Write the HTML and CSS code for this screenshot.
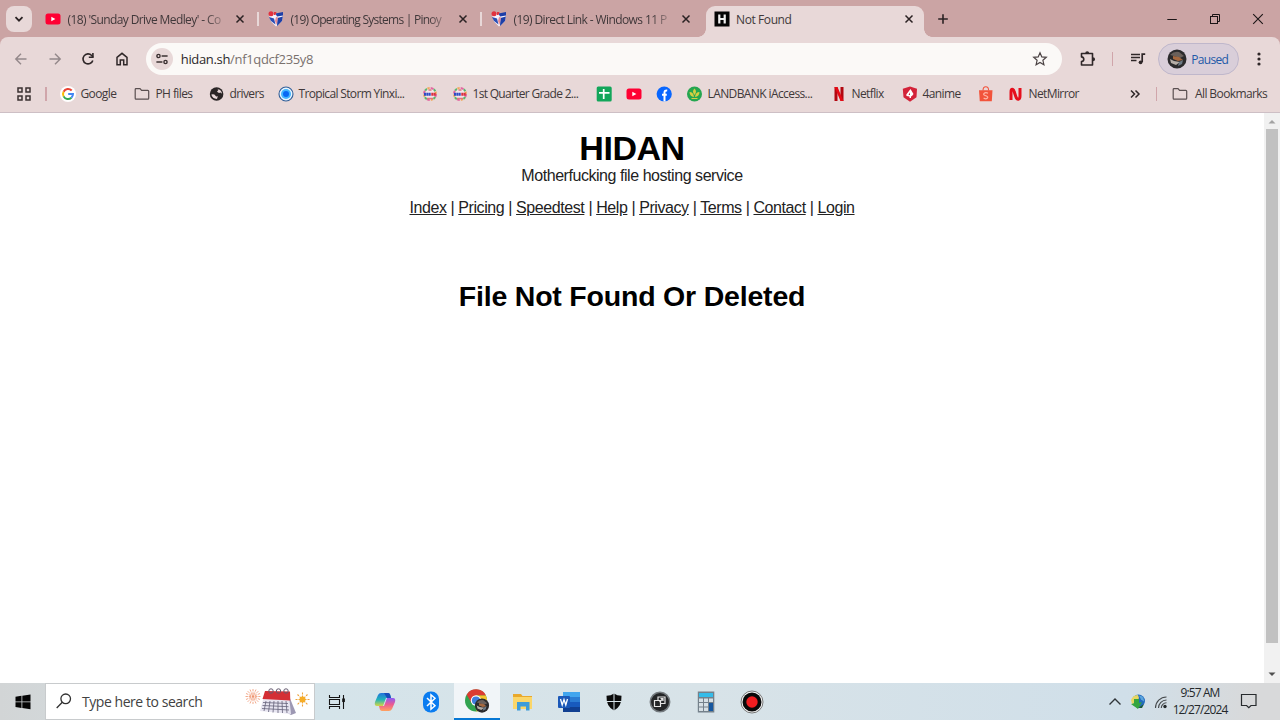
FILE: index.html
```html
<!DOCTYPE html>
<html lang="en">

<head>
    <meta charset="UTF-8">
    <meta name="viewport" content="width=device-width, initial-scale=1.0">
    <title>Not Found</title>
    <link rel="stylesheet" href="styles.css">
</head>

<body>
    <!-- Shared icons -->
    <svg class="defs" width="0" height="0">
        <symbol id="youtube" viewBox="0 0 16 16">
            <rect x="0.5" y="2.5" width="15" height="11" rx="2.5" fill="#ff0033" />
            <path d="M6.3 5.7v4.6L10.4 8z" fill="#fff" />
        </symbol>
        <symbol id="close" viewBox="0 0 10 10">
            <path d="M1.5 1.5l7 7M8.5 1.5l-7 7" stroke="#2b2223" stroke-width="1.5" />
        </symbol>
        <symbol id="pinoy" viewBox="0 0 16 16">
            <path d="M1 4l14-2-1 8-6 5.5-5-5z" fill="#f4f1fa" />
            <path d="M7.5 2.5L15 1v3.5l-6 1zM14.8 5.5L14 10l-5 5 .5-8z" fill="#1d3fa8" />
            <path d="M1 6l5 1.5 1.5 6L3 10z" fill="#2a4db4" />
            <path d="M8 6l2 .5L8.500 14 7 10z" fill="#e58b96" />
            <circle cx="3" cy="2.8" r="2.5" fill="#e1323f" />
            <path d="M6 1h2.5l-1 3H6z" fill="#e1323f" />
        </symbol>
        <symbol id="folder" viewBox="0 0 16 16">
            <path d="M1.2 3.4q0-.8.8-.8h4l1.6 1.8h6.2q.9 0 .9.9v7q0 .9-.9.9H2q-.8 0-.8-.9z" fill="none" stroke="#5a4f50" stroke-width="1.2" />
        </symbol>
        <symbol id="deped" viewBox="0 0 16 16">
            <circle cx="8" cy="8" r="6.5" fill="#f3e6ea" />
            <g fill="none" stroke-width="2">
                <circle cx="8" cy="8" r="6" stroke="#e2689f" stroke-dasharray="3 6.4" />
                <circle cx="8" cy="8" r="6" stroke="#5cb56f" stroke-dasharray="2.4 7" stroke-dashoffset="-3.2" />
                <circle cx="8" cy="8" r="6" stroke="#f0a85a" stroke-dasharray="2.4 7" stroke-dashoffset="-6" />
            </g>
            <path d="M5 12.5h6M6.5 4h3" stroke="#e0767c" stroke-width="1.3" />
            <path d="M2 8.2h7" stroke="#2f4cc4" stroke-width="3" stroke-dasharray="2 .3" />
            <path d="M9.3 8.2H14" stroke="#d9303f" stroke-width="3" stroke-dasharray="2 .3" />
        </symbol>
        <symbol id="avatar" viewBox="0 0 20 20">
            <circle cx="10" cy="10" r="9.5" fill="#2b2a2c" />
            <path d="M3 6q4-4 9-3l5 4-4 2-6-2z" fill="#6a605b" />
            <path d="M6 7l6 1 4 3-5 1-5-2z" fill="#a5683f" />
            <path d="M3 10l4 2 6 1-4 3-5-2z" fill="#b5ada6" />
            <path d="M12 13l4-2-1 4-4 2z" fill="#6d7a85" />
        </symbol>
    </svg>

    <!-- Tab strip -->
    <div class="tab-strip">
        <div class="tab-search">
            <svg width="10" height="10" viewBox="0 0 10 10"><path d="M1.5 3.2L5 6.7l3.5-3.5" fill="none" stroke="#2b2223" stroke-width="1.8" /></svg>
        </div>
        <div class="tab">
            <svg class="icon"><use href="#youtube" /></svg>
            <span class="tab-title fade sunday">(18) 'Sunday Drive Medley' - Co</span>
            <svg class="close"><use href="#close" /></svg>
        </div>
        <div class="tab divided">
            <svg class="icon"><use href="#pinoy" /></svg>
            <span class="tab-title fade systems">(19) Operating Systems | Pinoy</span>
            <svg class="close"><use href="#close" /></svg>
        </div>
        <div class="tab divided">
            <svg class="icon"><use href="#pinoy" /></svg>
            <span class="tab-title fade direct">(19) Direct Link - Windows 11 P</span>
            <svg class="close"><use href="#close" /></svg>
        </div>
        <div class="tab active">
            <svg class="icon" viewBox="0 0 16 16"><rect x=".5" y=".5" width="15" height="15" fill="#050505" /><path d="M5.3 3.5v9M10.7 3.5v9M5.3 8h5.4" stroke="#f0f0f0" stroke-width="2.2" /></svg>
            <span class="tab-title">Not Found</span>
            <svg class="close"><use href="#close" /></svg>
        </div>
        <svg class="new-tab" width="12" height="12" viewBox="0 0 12 12"><path d="M6 1.2v9.6M1.2 6h9.6" stroke="#2b2223" stroke-width="1.6" /></svg>
        <div class="window-buttons">
            <svg width="12" height="12" viewBox="0 0 12 12"><path d="M1.3 6.5h9.5" stroke="#1b1516" /></svg>
            <svg width="12" height="12" viewBox="0 0 12 12" fill="none" stroke="#1b1516"><rect x="1.5" y="3.5" width="7" height="7" /><path d="M3.5 3.5v-2h7v7h-2" /></svg>
            <svg width="12" height="12" viewBox="0 0 12 12"><path d="M1.2 1.2l9.6 9.6M10.8 1.2l-9.6 9.6" stroke="#1b1516" stroke-width="1.1" /></svg>
        </div>
    </div>

    <!-- Toolbar -->
    <div class="browser">
        <div class="toolbar">
            <svg class="nav-icon" viewBox="0 0 16 16"><path d="M13.5 8H3M8 2.8L2.8 8 8 13.2" fill="none" stroke="#93888a" stroke-width="1.4" /></svg>
            <svg class="nav-icon" viewBox="0 0 16 16"><path d="M2.5 8H13M8 2.8L13.2 8 8 13.2" fill="none" stroke="#93888a" stroke-width="1.4" /></svg>
            <svg class="nav-icon" viewBox="0 0 16 16"><path d="M12.8 9.4A5 5 0 1 1 11.7 4.5L13 6" fill="none" stroke="#2f2728" stroke-width="1.6" /><path d="M13.7 2v5H8.8V5.6h3.3V2z" fill="#2f2728" /></svg>
            <svg class="nav-icon" viewBox="0 0 16 16"><path d="M3 6.3l5-4 5 4v7.4H9.7V9H6.3v4.7H3z" fill="none" stroke="#2f2728" stroke-width="1.5" /></svg>
            <div class="address-bar">
                <span class="site-info">
                    <svg width="12" height="12" viewBox="0 0 12 12" fill="none" stroke="#3a3031" stroke-width="1.4"><circle cx="2.5" cy="3" r="1.6" /><path d="M5.6 3h6M.4 9h6" /><circle cx="9.5" cy="9" r="1.6" /></svg>
                </span>
                <span class="url">hidan.sh<span class="path">/nf1qdcf235y8</span></span>
                <svg class="star" viewBox="0 0 16 16"><path d="M8 1.8l1.8 4.1 4.5.4-3.4 3 1 4.4L8 11.4l-3.9 2.3 1-4.4-3.4-3 4.5-.4z" fill="none" stroke="#4b4344" stroke-width="1.2" /></svg>
            </div>
            <svg class="extensions" viewBox="0 0 18 18"><path d="M2.5 3.5h11V15h-11v-3.5q2.300-.3 2.300-2.300T2.500 6.900z" fill="none" stroke="#2f2728" stroke-width="1.6" stroke-linejoin="round" /><path d="M6.2 3.5a2 2.3 0 0 1 4 0zM13.8 7.3a2.3 2 0 0 1 0 4z" fill="#2f2728" /></svg>
            <span class="divider"></span>
            <svg class="media" viewBox="0 0 16 16" fill="none" stroke="#2f2728" stroke-width="1.5"><path d="M1 3.5h9M1 6.5h9M1 9.5h5.5" /><path d="M12.2 11V3.2h3" stroke-width="1.7" /><circle cx="10.6" cy="11.3" r="1.9" fill="#2f2728" stroke="none" /></svg>
            <div class="profile">
                <svg width="20" height="20"><use href="#avatar" /></svg>
                <span>Paused</span>
            </div>
            <svg class="more" viewBox="0 0 4 16" fill="#2f2728"><circle cx="2" cy="3" r="1.6" /><circle cx="2" cy="8" r="1.6" /><circle cx="2" cy="13" r="1.6" /></svg>
        </div>

        <!-- Bookmarks -->
        <div class="bookmarks">
            <svg class="apps" viewBox="0 0 14 14" fill="none" stroke="#3a3031" stroke-width="1.5"><rect x="1" y="1" width="4" height="4" /><rect x="9" y="1" width="4" height="4" /><rect x="1" y="9" width="4" height="4" /><rect x="9" y="9" width="4" height="4" /></svg>
            <span class="divider"></span>
            <div class="bookmark google">
                <svg class="icon" viewBox="0 0 16 16"><circle cx="8" cy="8" r="8" fill="#fff" /><g fill="none" stroke-width="2"><path d="M11.7 4.5A5 5 0 0 0 3.6 5.7" stroke="#ea4335" /><path d="M3.6 5.7a5 5 0 0 0 0 4.7" stroke="#fbbc05" /><path d="M3.6 10.4a5 5 0 0 0 7.8 1.3" stroke="#34a853" /><path d="M11.4 11.7A5 5 0 0 0 13 8.1H8.2" stroke="#4285f4" /></g></svg>
                <span>Google</span>
            </div>
            <div class="bookmark ph">
                <svg class="icon"><use href="#folder" /></svg>
                <span>PH files</span>
            </div>
            <div class="bookmark drivers">
                <svg class="icon" viewBox="0 0 16 16"><circle cx="7.6" cy="8" r="6.8" fill="#2a2526" /><path d="M2.3 8.5q3-.8 4 1t2 .7-.3 2.8q-4.700-.5-5.700-4.500zM8 2.800l1.500 1-1.500 2 2 1.200 1.500-.5L13 7.800q-.2-3.800-5-5z" fill="#e8d8d9" /></svg>
                <span>drivers</span>
            </div>
            <div class="bookmark storm">
                <svg class="icon" viewBox="0 0 16 16"><circle cx="8" cy="8" r="7" fill="#e8f5ff" stroke="#315e98" stroke-width="1.1" /><circle cx="8" cy="8" r="5" fill="#42b6ff" /><circle cx="8" cy="8" r="3" fill="#0869f4" /></svg>
                <span>Tropical Storm Yinxi...</span>
            </div>
            <div class="bookmark small"><svg class="icon"><use href="#deped" /></svg></div>
            <div class="bookmark quarter">
                <svg class="icon"><use href="#deped" /></svg>
                <span>1st Quarter Grade 2...</span>
            </div>
            <div class="bookmark small"><svg class="icon" viewBox="0 0 16 16"><rect x=".7" y=".5" width="15" height="15" rx="1.5" fill="#12a65a" /><path d="M7.7 3v10M3 6.8h10.5" stroke="#fff" stroke-width="1.7" /></svg></div>
            <div class="bookmark small"><svg class="icon"><use href="#youtube" /></svg></div>
            <div class="bookmark small facebook"><svg class="icon" viewBox="0 0 16 16"><circle cx="8.2" cy="8" r="7.6" fill="#0866ff" /><path d="M8.5 15.4V6.5q0-2.3 2.7-2M6 8.7h4.8" fill="none" stroke="#fff" stroke-width="2" /></svg></div>
            <div class="bookmark landbank">
                <svg class="icon" viewBox="0 0 16 16"><circle cx="7.5" cy="8" r="7.5" fill="#25a650" /><path d="M7.5 2.5q3 3.2 0 6.5-3-3.3 0-6.5M2.5 6q4 0 4.5 5-4.3-.5-4.5-5M12.5 6q-4 0-4.5 5 4.3-.5 4.5-5" fill="#d6cf42" /><path d="M4.5 12.5h6" stroke="#d6cf42" /></svg>
                <span>LANDBANK iAccess...</span>
            </div>
            <div class="bookmark netflix">
                <svg class="icon" viewBox="0 0 16 16"><path d="M3.5 1h3v14h-3zM9.5 1h3v14h-3z" fill="#b20710" /><path d="M3.5 1h3l6 14h-3z" fill="#e50914" /></svg>
                <span>Netflix</span>
            </div>
            <div class="bookmark anime">
                <svg class="icon" viewBox="0 0 16 16"><path d="M8 .5l7 2.3-.5 8.5L8 15.700l-6.500-4.400L.8 2.800z" fill="#d32339" /><path d="M8.500 3l3 5-1.500 2-1 .5V12H7.500v-1.500l-3-.5-.2-1.500z" fill="#fff" /><path d="M8 6.500V9H6.500z" fill="#d32339" /></svg>
                <span>4anime</span>
            </div>
            <div class="bookmark small"><svg class="icon" viewBox="0 0 16 16"><path d="M1 4.3h13.5l-.7 11h-12z" fill="#f2533b" /><path d="M5 4.5Q5 .8 7.800.8t2.800 3.700" fill="none" stroke="#f2533b" stroke-width="1.1" /><path d="M10 7.200Q7.700 6 6.300 7.200t.3 2.100l2.300.9q1.600.9.3 2.100t-3.600-.2" fill="none" stroke="#ffb5a6" stroke-width="1.2" /></svg></div>
            <div class="bookmark mirror">
                <svg class="icon" viewBox="0 0 16 16"><path d="M3 14V6q0-3.300 1.800-2.600 1 .4 1.500 2.600l1.500 4.500q1 3 2.600 2.700 1.600-.4 1.600-3.200V2" fill="none" stroke="#e50f1d" stroke-width="3" /></svg>
                <span>NetMirror</span>
            </div>
            <svg class="overflow" viewBox="0 0 12 12"><path d="M2 2.500L5.500 6 2 9.500M6.500 2.500L10 6 6.500 9.500" fill="none" stroke="#2f2728" stroke-width="1.5" /></svg>
            <span class="divider"></span>
            <div class="bookmark all">
                <svg class="icon"><use href="#folder" /></svg>
                <span>All Bookmarks</span>
            </div>
        </div>
    </div>

    <!-- Page -->
    <div class="viewport">
        <div class="page">
            <h1>HIDAN</h1>
            <p class="tagline">Motherfucking file hosting service</p>
            <nav>
                <a href="#">Index</a> |
                <a href="#">Pricing</a> |
                <a href="#">Speedtest</a> |
                <a href="#">Help</a> |
                <a href="#">Privacy</a> |
                <a href="#">Terms</a> |
                <a href="#">Contact</a> |
                <a href="#">Login</a>
            </nav>
            <h2>File Not Found Or Deleted</h2>
        </div>
        <div class="scrollbar">
            <svg width="16" height="16" viewBox="0 0 16 16"><path d="M4.5 10.5L8 7l3.5 3.5z" fill="#a3a3a3" /></svg>
            <div class="thumb"></div>
            <svg width="16" height="16" viewBox="0 0 16 16"><path d="M4.5 5.5L8 9l3.5-3.5z" fill="#505050" /></svg>
        </div>
    </div>

    <!-- Taskbar -->
    <div class="taskbar">
        <div class="start">
            <svg width="16" height="16" viewBox="0 0 16 16" fill="#050505"><path d="M.5 2.700l6-.9v5.600h-6zM7.300 1.700L15.500.5v6.900H7.300zM.5 8.200h6v5.700l-6-.9zM7.300 8.200h8.200v7L7.300 14z" /></svg>
        </div>
        <div class="search">
            <svg class="magnifier" width="18" height="18" viewBox="0 0 18 18" fill="none" stroke="#303030" stroke-width="1.3"><circle cx="10.7" cy="6.8" r="4.8" /><path d="M7.3 10.3L1.7 16" /></svg>
            <span>Type here to search</span>
            <svg width="66" height="30" viewBox="0 0 66 30">
                <g stroke="#ef946f" stroke-dasharray="2.4 .8"><path d="M8 2v15M.5 9.500h15M2.700 4.200l10.600 10.600M13.300 4.200L2.700 14.800M5 2.500l6 14M11 2.500l-6 14M1 6.500l14 6M15 6.500l-14 6" stroke-width=".8" /></g>
                <path d="M44 9l7 17-5 2-5-3z" fill="#9d98b3" />
                <path d="M19 9h25l2 18-31-3z" fill="#e7e5f1" />
                <path d="M20 4l25 .5.3 9L17.5 12z" fill="#d42f35" />
                <path d="M18 15.500l25 1M17.500 18.500l26 1.200M17 21.500L44 23M21 14l-2 10M25 14l-1.500 11M29 14l-1 11.500M33 14v12M37 14l.5 12M41 14l1 12" stroke="#65627a" stroke-width=".8" />
                <g fill="none" stroke="#655b70"><circle cx="26" cy="4" r="2.2" /><circle cx="33.5" cy="4" r="2.2" /><circle cx="41" cy="4" r="2.2" /></g>
                <path d="M57.500 5.500v14M50.500 12.500h14M52.500 7.500l10 10M62.500 7.500l-10 10" stroke="#efa33a" stroke-width="1.1" stroke-dasharray="2 1" />
                <circle cx="57.5" cy="12.5" r="3" fill="#f6ad27" />
            </svg>
        </div>
        <div class="task view">
            <svg width="18" height="18" viewBox="0 0 18 18" fill="none" stroke="#151515" stroke-width="1.1"><path d="M1.5 2v2.500h10V2M1.500 16v-2.500h10V16M1.500 6.500h10v5h-10zM15.500 2v14" /><rect x="14.8" y="6" width="1.5" height="2.5" fill="#151515" /></svg>
        </div>
        <div class="task">
            <svg width="22" height="22" viewBox="0 0 22 22">
                <defs>
                    <linearGradient id="cool" x2="0" y2="1"><stop stop-color="#2273dd" /><stop offset=".5" stop-color="#21b2ba" /><stop offset="1" stop-color="#d5d644" /></linearGradient>
                    <linearGradient id="warm" x2="0" y2="1"><stop stop-color="#8c5cf5" /><stop offset=".5" stop-color="#ec5b91" /><stop offset="1" stop-color="#ffa25e" /></linearGradient>
                </defs>
                <path d="M7 2h7q2 0 2.5 3l.5 2h-5l-3 8H3q-3 0-2-4l3-7q1-2 3-2z" fill="url(#cool)" />
                <path d="M15 20H8q-2 0-2.5-3L5 15h5l3-8h6q3 0 2 4l-3 7q-1 2-3 2z" fill="url(#warm)" />
                <path d="M10 2h4q2 0 2.5 3l.5 2h-4z" fill="#174dbb" />
            </svg>
        </div>
        <div class="task">
            <svg width="20" height="22" viewBox="0 0 20 22"><rect x="2" y=".5" width="16" height="21" rx="7.5" fill="#0a7cf0" /><path d="M6 7l8 7.8-4 3.400V3.800l4 3.400L6 15" fill="none" stroke="#fff" stroke-width="1.5" /></svg>
        </div>
        <div class="task current">
            <svg width="26" height="26" viewBox="0 0 26 26">
                <circle cx="12" cy="12.5" r="11" fill="#32a350" />
                <path d="M12 12.5v-5h10A11 11 0 0 0 2.7 6.700l5 8.500z" fill="#dc3b32" />
                <path d="M12 7.5h9.800A11 11 0 0 1 12 23.500l4.500-8.500z" fill="#f7c52c" />
                <circle cx="12" cy="12.5" r="5.2" fill="#fff" />
                <circle cx="12" cy="12.5" r="4.1" fill="#3f7ddd" />
                <svg x="10.5" y="10" width="15" height="15"><use href="#avatar" width="15" height="15" /></svg>
            </svg>
        </div>
        <div class="task">
            <svg width="22" height="20" viewBox="0 0 22 20"><path d="M1 2h8l1.5 2H20v13H1z" fill="#e9a92c" /><path d="M1 5h19v12H1z" fill="#fbd669" /><path d="M5 18.500V10h12.500v8.500H14v-4H8.500v4z" fill="#3e9cd9" /></svg>
        </div>
        <div class="task">
            <svg width="24" height="22" viewBox="0 0 24 22"><path d="M6 1h17v5H6z" fill="#41a5ee" /><path d="M6 6h17v5H6z" fill="#2b7cd3" /><path d="M6 11h17v5H6z" fill="#185abd" /><path d="M6 16h17v5H6z" fill="#103f91" /><rect x="1" y="5" width="12" height="12" rx="1" fill="#1b58b8" /><path d="M3.5 8l1.700 6L7 8.500 8.800 14l1.700-6" fill="none" stroke="#fff" stroke-width="1.3" /></svg>
        </div>
        <div class="task">
            <svg width="18" height="18" viewBox="0 0 18 18"><path d="M9 .5q3 2.300 7.500 2.300Q17 13.500 9 17.500 1 13.500 1.500 2.800 6 2.800 9 .5z" fill="#0b0b0b" /><path d="M9 0v18M1 8.500h16" stroke="#d9e5ea" /></svg>
        </div>
        <div class="task">
            <svg width="22" height="22" viewBox="0 0 22 22"><circle cx="11" cy="11" r="9.7" fill="#242628" stroke="#747a7e" stroke-width="1.5" /><path d="M5.500 9.500h6v6h-6zM9 9V6h7v6.500h-4M10.500 11L14 7.500M11.500 7.500H14V10" fill="none" stroke="#e5e5e5" stroke-width="1.2" /></svg>
        </div>
        <div class="task">
            <svg width="18" height="22" viewBox="0 0 18 22"><rect x=".8" y=".5" width="16.5" height="21" fill="#75818b" /><path d="M2 2h14v4H2z" fill="#35bce9" /><path d="M2 7.500h4V11H2zM7 7.500h4V11H7zM12 7.500h4V11h-4zM2 12h4v3.500H2zM7 12h4v3.500H7zM2 16.500h4V20H2zM7 16.500h4V20H7z" fill="#d7e0e5" /><path d="M12 12h4v8h-4z" fill="#1658a0" /></svg>
        </div>
        <div class="task">
            <svg width="24" height="24" viewBox="0 0 24 24"><circle cx="12" cy="12" r="11" fill="#f7f7f7" stroke="#777" /><circle cx="12" cy="12" r="9.5" fill="#090909" /><circle cx="12" cy="12" r="5.7" fill="#f01d20" /></svg>
        </div>

        <div class="tray">
            <svg width="14" height="12" viewBox="0 0 14 12"><path d="M1.5 8.500L7 3l5.500 5.500" fill="none" stroke="#303539" stroke-width="1.4" /></svg>
            <svg class="idm" width="16" height="16" viewBox="0 0 16 16"><circle cx="8.5" cy="7" r="6.5" fill="#236bbd" /><path d="M1 6q2-5 7-5l1 3-3 5-4 1z" fill="#e6d763" /><path d="M4 5h5v4l3-1-4 7-7-5 3-.5z" fill="#35a53e" /><path d="M9 1.500q5 0 5 6l-3-2z" fill="#5ba5dd" /><path d="M8 14l6-4-2 4z" fill="#1c5a35" /></svg>
            <svg class="wifi" width="14" height="14" viewBox="0 0 14 14" fill="none" stroke="#45494c" stroke-width="1.1"><path d="M1.5 13a11 11 0 0 1 11-11M4.500 13a8 8 0 0 1 8-8M7.300 13a5.200 5.200 0 0 1 5.200-5.200" /><circle cx="11" cy="11.5" r="1.7" fill="#24282b" stroke="none" /></svg>
            <div class="clock">
                <span>9:57 AM</span>
                <span>12/27/2024</span>
            </div>
            <svg class="notice" width="18" height="18" viewBox="0 0 18 18"><path d="M1.500 2.500H16v11h-5l-2.200 2.200-2.200-2.200H1.500z" fill="none" stroke="#272b2e" stroke-width="1.2" /></svg>
        </div>
    </div>
</body>

</html>
```
FILE: styles.css
```css
* {
    box-sizing: border-box;
}

body {
    margin: 0;
    height: 720px;
    display: flex;
    flex-direction: column;
    overflow: hidden;
    background: #fff;
    font-family: "Open Sans", "Noto Sans", sans-serif;
    font-size: 12px;
    color: #40383a;
}

svg {
    display: block;
    flex: none;
}

.defs {
    position: absolute;
}

.icon {
    width: 16px;
    height: 16px;
}

.close {
    width: 10px;
    height: 10px;
}

/* Tab strip */
.tab-strip {
    display: flex;
    flex: none;
    height: 46px;
    padding: 6px 0 0 6px;
    background: #cba4a4;
}

.tab-search {
    display: flex;
    align-items: center;
    justify-content: center;
    width: 26px;
    height: 26px;
    margin-right: 4px;
    border-radius: 8px;
    background: #e8d8d8;
}

.tab {
    position: relative;
    display: flex;
    align-items: center;
    width: 223px;
    height: 26px;
    padding-left: 9px;
}

.tab.divided::before {
    content: "";
    position: absolute;
    left: -2px;
    top: 6px;
    width: 2px;
    height: 14px;
    background: #e8d8d8;
}

.tab-title {
    width: 156px;
    margin-left: 6.5px;
    white-space: nowrap;
    letter-spacing: -0.6px;
}

.tab-title.fade {
    -webkit-mask-image: linear-gradient(to right, #000 88%, transparent 104%);
    mask-image: linear-gradient(to right, #000 88%, transparent 104%);
}

.tab-title.systems {
    letter-spacing: -0.75px;
}

.tab .close {
    margin-left: 11.5px;
}

.tab.active {
    width: 218px;
    height: 32px;
    margin-left: 1px;
    padding: 0 0 6px 8px;
    border-radius: 9px 9px 0 0;
    background: #e8d8d8;
}

.tab.active .tab-title {
    margin-left: 6px;
    letter-spacing: -0.4px;
}

.tab.active .close {
    margin-left: 12px;
}

/* curved feet of the active tab */
.tab.active::before,
.tab.active::after {
    content: "";
    position: absolute;
    bottom: 1px;
    width: 8px;
    height: 8px;
}

.tab.active::before {
    left: -8px;
    background: radial-gradient(circle at 0 0, transparent 7.5px, #e8d8d8 8px);
}

.tab.active::after {
    right: -8px;
    background: radial-gradient(circle at 100% 0, transparent 7.5px, #e8d8d8 8px);
}

.new-tab {
    margin: 7px 0 0 13px;
}

.window-buttons {
    display: flex;
    gap: 31px;
    margin: 7px 16px 0 auto;
}

/* Toolbar, sits over the bottom of the tab strip */
.browser {
    position: relative;
    flex: none;
    height: 76px;
    margin-top: -9px;
    border-bottom: 1px solid #cdbfc5;
    border-radius: 8px 8px 0 0;
    background: #e8d8d8;
}

.toolbar {
    display: flex;
    align-items: center;
    height: 44px;
    padding-left: 13px;
}

.nav-icon {
    width: 16px;
    height: 16px;
    margin-right: 17.7px;
}

.address-bar {
    display: flex;
    align-items: center;
    width: 916px;
    height: 32px;
    margin-left: -2px;
    padding: 0 14px 0 5px;
    border-radius: 16px;
    background: #fbf9f7;
}

.site-info {
    display: flex;
    align-items: center;
    justify-content: center;
    width: 22px;
    height: 22px;
    border-radius: 50%;
    background: #e8d8d8;
}

.url {
    margin-left: 8px;
    font-size: 13px;
    letter-spacing: -0.33px;
    color: #2b2829;
}

.path {
    color: #79716e;
}

.star {
    width: 16px;
    height: 16px;
    margin-left: auto;
}

.extensions {
    width: 18px;
    height: 18px;
    margin-left: 17px;
}

.divider {
    width: 1.5px;
    height: 14px;
    background: #d0a5aa;
}

.toolbar .divider {
    margin-left: 15px;
}

.media {
    width: 16px;
    height: 16px;
    margin-left: 17px;
}

.profile {
    display: flex;
    align-items: center;
    width: 81px;
    height: 32px;
    margin-left: 12px;
    padding-left: 8px;
    border: 1px solid #bfb7cb;
    border-radius: 16px;
    background: #d9ced9;
    color: #2159a8;
}

.profile span {
    margin-left: 4px;
    letter-spacing: -0.9px;
    letter-spacing: -0.7px;
}

.more {
    width: 4px;
    height: 16px;
    margin-left: 18px;
}

/* Bookmarks */
.bookmarks {
    display: flex;
    align-items: center;
    height: 25px;
    padding-left: 17px;
}

.apps {
    width: 14px;
    height: 14px;
    margin-right: 14px;
}

.apps + .divider {
    margin-right: 13px;
}

.bookmark {
    display: flex;
    flex: none;
    align-items: center;
    white-space: nowrap;
    letter-spacing: -0.6px;
}

.bookmark span {
    margin-left: 5px;
}

.google {
    width: 74px;
}

.ph {
    width: 75px;
}

.ph span {
    margin-left: 6px;
}

.drivers {
    width: 69px;
}

.storm,
.quarter,
.landbank {
    width: 144px;
}

.storm {
    letter-spacing: -0.65px;
}

.quarter {
    letter-spacing: -0.7px;
}

.small {
    width: 30px;
}

.facebook {
    width: 31px;
}

.netflix {
    width: 71px;
}

.anime {
    width: 76px;
}

.mirror {
    width: 121px;
}

.overflow {
    width: 12px;
    height: 12px;
    margin-right: 15px;
}

.overflow + .divider {
    margin-right: 15px;
}

.all span {
    margin-left: 7px;
}

/* Page */
.viewport {
    display: flex;
    height: 570px;
    flex: none;
}

.page {
    flex: 1;
    padding-top: 16px;
    text-align: center;
    font-family: "Liberation Sans", Arial, sans-serif;
    font-size: 16px;
    letter-spacing: -0.45px;
    color: #222;
}

h1 {
    margin: 0;
    font-size: 34px;
    line-height: 38px;
    color: #000;
}

.tagline {
    margin: 0;
    line-height: 17px;
}

nav {
    margin-top: 15px;
    line-height: 17px;
    letter-spacing: -0.42px;
}

nav a {
    color: #222;
}

h2 {
    margin: 64px 0 0;
    font-size: 28.5px;
    line-height: 32px;
    letter-spacing: -0.2px;
    color: #000;
}

.scrollbar {
    display: flex;
    flex-direction: column;
    width: 16px;
    background: #f1f1f1;
}

.thumb {
    width: 12px;
    height: 514px;
    margin: 0 auto 24px;
    background: #c1c1c1;
}

/* Taskbar */
.taskbar {
    display: flex;
    flex: none;
    height: 37px;
    background: linear-gradient(to right, #d2d5d6 0, #d5e4ea 25%, #d8e3e8 55%, #d0dfe9 88%, #d8d9da 98%);
}

.start {
    display: flex;
    align-items: center;
    justify-content: center;
    width: 45px;
}

.search {
    display: flex;
    align-items: center;
    width: 270px;
    border: 1px solid #c8cbcd;
    background: #fff;
    padding-left: 9px;
    font-size: 14px;
    color: #424242;
}

.magnifier {
    margin-bottom: 2px;
}

.search span {
    width: 163px;
    margin-left: 9px;
    letter-spacing: -0.45px;
    white-space: nowrap;
}

.task {
    display: flex;
    align-items: center;
    justify-content: center;
    width: 45.9px;
}

.task.view {
    width: 47px;
    padding-right: 3px;
}

.current {
    border-bottom: 2px solid #0878d4;
    background: #f1f5f8;
}

.tray {
    display: flex;
    align-items: center;
    margin-left: auto;
    padding-right: 22px;
}

.idm {
    margin-left: 8px;
}

.wifi {
    margin-left: 8px;
}

.clock {
    display: flex;
    flex-direction: column;
    align-items: center;
    width: 54px;
    margin: 0 13px 2px 5px;
    font-size: 12px;
    line-height: 17px;
    letter-spacing: -0.9px;
    white-space: nowrap;
    color: #24282b;
}

.notice {
    margin-bottom: 1px;
}
```
